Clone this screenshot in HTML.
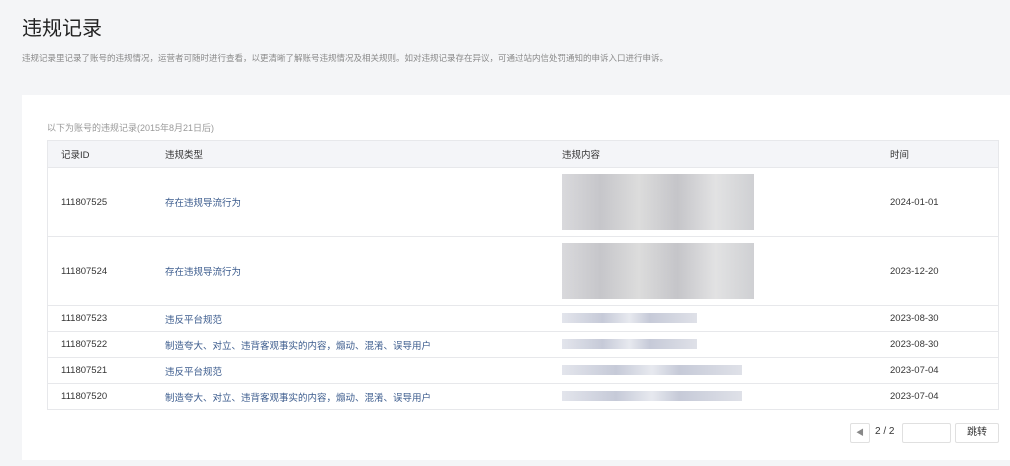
<!DOCTYPE html><html><head><meta charset="utf-8"><style>
body{margin:0;width:1010px;height:466px;background:#f4f5f7;font-family:"Liberation Sans","Noto Sans CJK SC",sans-serif;position:relative;overflow:hidden;color:#353535}
.a{position:absolute;white-space:nowrap}
h1{position:absolute;left:22px;top:12px;margin:0;font-size:20px;font-weight:normal;color:#222}
.card{position:absolute;left:22px;top:95px;width:988px;height:365px;background:#fff}
table{position:absolute;left:47px;top:140px;width:952px;border-collapse:collapse;font-size:9.5px;border:1px solid #e7e8eb}
th{background:#f4f5f8;text-align:left;font-weight:normal;height:26px;padding:0;color:#333;vertical-align:middle}
td{border-top:1px solid #e7e8eb;padding:0;color:#353535;vertical-align:middle}
td.t{color:#3b5b8d}
.c1{padding-left:13px;width:104px}.c2{width:397px}.c3{width:328px}
.blk{display:inline-block;vertical-align:middle;background:linear-gradient(90deg,#d9d9dc,#c6c6ca 20%,#dcdcdc 40%,#c5c5c9 60%,#e2e2e3 80%,#cfd0d3);}
.bl{display:inline-block;vertical-align:middle;height:10px;background:linear-gradient(90deg,#e3e5ec,#c6cad8 30%,#e7e9ef 50%,#c6cad8 65%,#dfe1e8);}
.btn{position:absolute;border:1px solid #e0e0e0;border-radius:2px;background:#fff;font-size:10px;text-align:center;box-sizing:border-box}
</style></head><body>
<h1>违规记录</h1>
<div class="a" style="left:22px;top:52px;font-size:8.5px;color:#8a8a8a">违规记录里记录了账号的违规情况，运营者可随时进行查看，以更清晰了解账号违规情况及相关规则。如对违规记录存在异议，可通过站内信处罚通知的申诉入口进行申诉。</div>
<div class="card"></div>
<div class="a" style="left:47px;top:121px;font-size:9px;color:#999">以下为账号的违规记录(2015年8月21日后)</div>
<table>
<tr><th class="c1">记录ID</th><th class="c2">违规类型</th><th class="c3">违规内容</th><th>时间</th></tr>
<tr style="height:69px"><td class="c1">111807525</td><td class="t">存在违规导流行为</td><td><span class="blk" style="width:192px;height:56px"></span></td><td>2024-01-01</td></tr>
<tr style="height:69px"><td class="c1">111807524</td><td class="t">存在违规导流行为</td><td><span class="blk" style="width:192px;height:56px"></span></td><td>2023-12-20</td></tr>
<tr style="height:26px"><td class="c1">111807523</td><td class="t">违反平台规范</td><td><span class="bl" style="width:135px"></span></td><td>2023-08-30</td></tr>
<tr style="height:26px"><td class="c1">111807522</td><td class="t">制造夸大、对立、违背客观事实的内容，煽动、混淆、误导用户</td><td><span class="bl" style="width:135px"></span></td><td>2023-08-30</td></tr>
<tr style="height:26px"><td class="c1">111807521</td><td class="t">违反平台规范</td><td><span class="bl" style="width:180px"></span></td><td>2023-07-04</td></tr>
<tr style="height:26px"><td class="c1">111807520</td><td class="t">制造夸大、对立、违背客观事实的内容，煽动、混淆、误导用户</td><td><span class="bl" style="width:180px"></span></td><td>2023-07-04</td></tr>
</table>
<div class="btn" style="left:850px;top:423px;width:20px;height:20px;line-height:18px;color:#888;font-size:8px">◀</div>
<div class="a" style="left:875px;top:426px;font-size:10px">2 / 2</div>
<div class="btn" style="left:902px;top:423px;width:49px;height:20px"></div>
<div class="btn" style="left:955px;top:423px;width:44px;height:20px;line-height:18px">跳转</div>
</body></html>
